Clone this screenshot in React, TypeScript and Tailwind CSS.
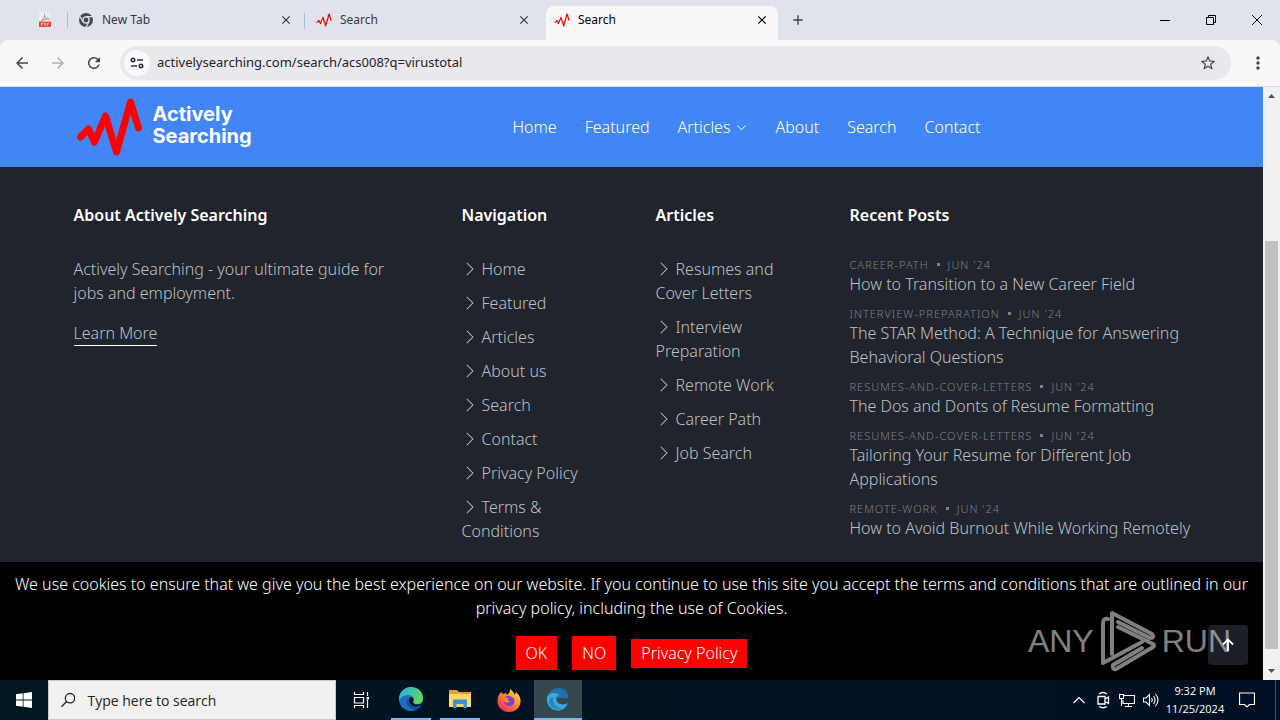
import { ReactNode } from "react"
import { BsChevronRight, BsChevronDown } from "react-icons/bs"
import { MdArrowBack, MdArrowForward, MdRefresh, MdStarBorder, MdMoreVert, MdClose, MdAdd } from "react-icons/md"

const menu = ["Home", "Featured", "Articles", "About", "Search", "Contact"]

const navigation = ["Home", "Featured", "Articles", "About us", "Search", "Contact", "Privacy Policy", "Terms & Conditions"]

const articles = ["Resumes and Cover Letters", "Interview Preparation", "Remote Work", "Career Path", "Job Search"]

const posts = [
  { category: "career-path", title: "How to Transition to a New Career Field" },
  { category: "interview-preparation", title: "The STAR Method: A Technique for Answering Behavioral Questions" },
  { category: "resumes-and-cover-letters", title: "The Dos and Donts of Resume Formatting" },
  { category: "resumes-and-cover-letters", title: "Tailoring Your Resume for Different Job Applications" },
  { category: "remote-work", title: "How to Avoid Burnout While Working Remotely" },
]

function Pulse({ className, width }: { className: string; width: number }) {
  return (
    <svg className={className} viewBox="0 0 66 58" fill="none" stroke="#ff0000" strokeWidth={width} strokeLinecap="round" strokeLinejoin="round">
      <path d="M4 39 L12 31 L18 44 L29 18 L40 54 L54 4 L62 30" />
    </svg>
  )
}

function ChromeIcon() {
  return (
    <svg className="size-4" viewBox="0 0 16 16">
      <circle cx="8" cy="8" r="7" fill="#474b50" />
      <circle cx="8" cy="8" r="3.1" fill="#474b50" stroke="#e0e3ec" strokeWidth="1.3" />
      <path d="M8 4.6 H14.4 M5 9.8 L1.9 4.4 M11 9.8 L7.9 15.2" stroke="#e0e3ec" strokeWidth="1.2" />
    </svg>
  )
}

function PdfIcon() {
  return (
    <svg className="h-4 w-3" viewBox="0 0 12 16">
      <path d="M0 0 H9 L12 3 V16 H0 Z" fill="#ecebee" />
      <path d="M2 9 C5 7 6 4 5.500 2 C5 5 8 7.500 10.500 7 C8 6.500 4 7.500 2 9" fill="none" stroke="#a5a09c" />
      <rect y="9.500" width="12" height="5.500" fill="#e8473c" />
      <path d="M2.500 13.500 V11 H4 V12.300 H2.500 M5.500 11 V13.500 H7 V11 Z M8.500 13.500 V11 H10" fill="none" stroke="#f8c5bf" strokeWidth="0.700" />
    </svg>
  )
}

function Tab({ title, icon, active }: { title: string; icon: ReactNode; active?: boolean }) {
  return (
    <div className={active ? "flex h-[34px] w-[232px] items-center rounded-t-lg bg-[#faf7f9] pr-2 pl-2 pb-1.5 text-black" : "flex h-[34px] w-[238px] items-center pr-3.5 pl-2 pb-1.5 text-[#33373d]"}>
      {icon}
      <span className="ml-2 flex-1">{title}</span>
      <button aria-label="Close tab" className="flex size-4 items-center justify-center">
        <MdClose className="size-3.5" />
      </button>
    </div>
  )
}

function Browser() {
  return (
    <div className="font-['Noto_Sans','Open_Sans',sans-serif] text-[12px]">
      <div className="flex h-10 bg-[#e0e3ec]">
        <div className="flex flex-1 items-end">
          <div className="flex h-[34px] w-[70px] items-center justify-end gap-4 pb-1.5">
            <PdfIcon />
            <span className="mr-0.5 h-4 w-px bg-[#a9bfe0]" />
          </div>
          <Tab title="New Tab" icon={<ChromeIcon />} />
          <span className="-ml-1 mr-[3px] mb-[11px] h-4 w-px bg-[#a9bfe0]" />
          <Tab title="Search" icon={<Pulse className="h-3.5 w-4" width={5} />} />
          <Tab title="Search" icon={<Pulse className="h-3.5 w-4" width={5} />} active />
          <button aria-label="New tab" className="flex h-[34px] w-10 items-center justify-center pb-1.5">
            <MdAdd className="size-4 text-[#3c4045]" />
          </button>
        </div>
        <div className="flex">
          <button aria-label="Minimize" className="flex w-[46px] items-center justify-center">
            <span className="h-px w-2.5 bg-black" />
          </button>
          <button aria-label="Restore" className="flex w-[46px] items-center justify-center">
            <svg className="size-2.5" viewBox="0 0 10 10" fill="none" stroke="#000"><path d="M0.500 2.500 H7.500 V9.500 H0.500 Z M2.500 2.500 V0.500 H9.500 V7.500 H7.500" /></svg>
          </button>
          <button aria-label="Close" className="flex w-[46px] items-center justify-center">
            <svg className="size-2.5" viewBox="0 0 10 10" stroke="#000"><path d="M0 0 L10 10 M10 0 L0 10" /></svg>
          </button>
        </div>
      </div>
      <div className="bg-[#e0e3ec]">
        <div className="flex h-[47px] items-center rounded-t-lg border-b border-[#cfdcee] bg-[#faf7f9] pl-1 text-[#44464b]">
          <button aria-label="Back" className="flex w-9 justify-center"><MdArrowBack className="size-[18px]" /></button>
          <button aria-label="Forward" className="flex w-9 justify-center text-[#aeb0b5]"><MdArrowForward className="size-[18px]" /></button>
          <button aria-label="Reload" className="flex w-9 justify-center"><MdRefresh className="size-[18px]" /></button>
          <div className="ml-2 flex h-[34px] flex-1 items-center rounded-full bg-[#e9e8ed] pr-3.5 pl-1">
            <button aria-label="Site information" className="flex size-[26px] items-center justify-center rounded-full bg-[#faf8fb]">
              <svg className="h-3 w-3.5" viewBox="0 0 14 12" fill="none" stroke="#303236" strokeWidth="1.600">
                <circle cx="3" cy="3" r="1.700" />
                <path d="M7 3 H13 M1 9 H7" />
                <circle cx="11" cy="9" r="1.700" />
              </svg>
            </button>
            <input aria-label="Address" className="ml-[7px] flex-1 bg-transparent text-[13px] text-[#222428] outline-none" defaultValue="activelysearching.com/search/acs008?q=virustotal" />
            <button aria-label="Bookmark"><MdStarBorder className="size-[18px]" /></button>
          </div>
          <button aria-label="Menu" className="mr-3 ml-[17px]"><MdMoreVert className="size-5" /></button>
        </div>
      </div>
    </div>
  )
}

function Header() {
  return (
    <header className="bg-[#4286f5]">
      <div className="mx-auto flex h-20 max-w-[1164px] items-center">
        <a href="#" className="flex w-1/3 items-center gap-2.5 pl-6">
          <Pulse className="ml-0.5 h-[58px] w-[67px]" width={7} />
          <span className="pb-1 font-['Inter',sans-serif] text-[20px] leading-[22px] font-bold text-white">Actively<br />Searching</span>
        </a>
        <nav className="flex flex-1 gap-7 pl-[75px] text-white">
          {menu.map((item) => (
            <a key={item} href="#" className="flex items-center gap-1.5">
              {item}
              {item === "Articles" && <BsChevronDown className="size-[11px]" />}
            </a>
          ))}
        </nav>
      </div>
    </header>
  )
}

function LinkList({ title, links }: { title: string; links: string[] }) {
  return (
    <div className="col-span-2 px-6">
      <h2 className="mb-[30px] font-semibold text-white">{title}</h2>
      <ul className="flex flex-col gap-2.5">
        {links.map((link) => (
          <li key={link}>
            <a href="#"><BsChevronRight className="mr-1 inline size-4 align-[-2px]" />{link}</a>
          </li>
        ))}
      </ul>
    </div>
  )
}

function Footer() {
  return (
    <footer className="flex-1 bg-[#20242c] pt-9 text-[#bec0c4]">
      <div className="mx-auto grid max-w-[1164px] grid-cols-12">
        <div className="col-span-4 px-6">
          <h2 className="mb-[30px] font-semibold text-white">About Actively Searching</h2>
          <p className="mb-4">Actively Searching - your ultimate guide for jobs and employment.</p>
          <a href="#" className="inline-block border-b border-white">Learn More</a>
        </div>
        <LinkList title="Navigation" links={navigation} />
        <LinkList title="Articles" links={articles} />
        <div className="col-span-4 pr-3 pl-6">
          <h2 className="mb-[30px] font-semibold text-white">Recent Posts</h2>
          <ul className="flex flex-col gap-2.5">
            {posts.map((post) => (
              <li key={post.title}>
                <div className="flex items-center gap-2 text-[11px] leading-[15px] tracking-[1px] text-[#7f8287] uppercase">
                  <span>{post.category}</span>
                  <span className="size-[3px] bg-[#7f8287]" />
                  <span>Jun '24</span>
                </div>
                <a href="#" className="block">{post.title}</a>
              </li>
            ))}
          </ul>
        </div>
      </div>
    </footer>
  )
}

function CookieBar() {
  return (
    <div className="bg-black px-3 py-2.5 text-center text-white">
      <p>We use cookies to ensure that we give you the best experience on our website. If you continue to use this site you accept the terms and conditions that are outlined in our privacy policy, including the use of Cookies.</p>
      <div className="mt-4 flex items-center justify-center gap-[15px]">
        <button className="h-[34px] bg-[#ff0000] px-2.5">OK</button>
        <button className="h-[34px] bg-[#ff0000] px-2.5">NO</button>
        <a href="#" className="h-[29px] bg-[#ff0000] px-2.5 leading-[29px]">Privacy Policy</a>
      </div>
    </div>
  )
}

function Watermark() {
  return (
    <div className="pointer-events-none absolute right-8 bottom-2 flex items-center gap-1.5 font-['Liberation_Sans',sans-serif] text-[32px] leading-none text-white opacity-50">
      <span>ANY</span>
      <svg className="h-[62px] w-14" viewBox="0 0 56 62" fill="none" stroke="#fff" strokeWidth="4" strokeLinejoin="round" strokeLinecap="round">
        <path d="M8 9 Q3 8 3 13 V53 L42 32" />
        <path d="M12 44 V3 L52 24 Q55 28 50 28 L18 12" />
        <path d="M18 17 L53 34 Q55 36 53 37 L16 59 Q12 60 13 55 L42 38" />
      </svg>
      <span>RUN</span>
    </div>
  )
}

function Scrollbar() {
  return (
    <div className="flex w-[17px] flex-col items-center bg-[#f1f1f1]">
      <svg className="h-[17px] w-[17px] shrink-0" viewBox="0 0 17 17"><path d="M5 11 L8.500 7 L12 11 Z" fill="#505050" /></svg>
      <div className="flex-[137]" />
      <div className="w-[13px] flex-[408] bg-[#c1c1c1]" />
      <div className="flex-[14]" />
      <svg className="h-[17px] w-[17px] shrink-0" viewBox="0 0 17 17"><path d="M5 6 L8.500 10 L12 6 Z" fill="#505050" /></svg>
    </div>
  )
}

function EdgeIcon() {
  return (
    <svg className="size-6" viewBox="0 0 24 24">
      <defs>
        <linearGradient id="edgeTop" x1="0" y1="0" x2="1" y2="0.400">
          <stop offset="0" stopColor="#2aa8e6" />
          <stop offset="1" stopColor="#5fd865" />
        </linearGradient>
      </defs>
      <circle cx="12" cy="12" r="12" fill="#1a6fc4" />
      <path d="M0 11 C1 4 6 0 12 0 C19 0 24 5 24 11 C24 15 21 17 18 17 C15 17 14 16 14.500 14.500 C16 12 14 8 9.500 8 C5 8 1.500 10 0 14 Z" fill="url(#edgeTop)" />
      <path d="M8 12 C6 17 10 22 16 23 C19 22 21.500 20 22.500 18 C17 21 10 19 10 13 Z" fill="#124c94" />
      <path d="M10 13 C10 10.500 12 9.500 14 11 C15 12 14.500 14 14 15 C14 17 17 18.500 22 17 L24 15 V20 L22.500 18 C17 21 10 19 10 13 Z" fill="#02151f" />
    </svg>
  )
}

function FolderIcon() {
  return (
    <svg className="h-[18px] w-[22px]" viewBox="0 0 22 18">
      <path d="M0 0 H8 L10 2 H22 V17 H0 Z" fill="#e5a126" />
      <path d="M0 4 H22 V17 H0 Z" fill="#ffd96c" />
      <path d="M4 18 V9.500 H18 V18 H14.500 V14 H7.500 V18 Z" fill="#3e94d1" />
    </svg>
  )
}

function FirefoxIcon() {
  return (
    <svg className="size-6" viewBox="0 0 24 24">
      <defs>
        <linearGradient id="fox" x1="1" y1="0" x2="0.200" y2="1">
          <stop offset="0" stopColor="#fff04a" />
          <stop offset="0.450" stopColor="#ff9324" />
          <stop offset="1" stopColor="#f0255c" />
        </linearGradient>
      </defs>
      <path d="M4 4 L6 6 L9 5 L10 7 C12 6 13 4 13 1 C16 3 17 5 17.500 7 L19 4 C22 7 24 10 23.500 14 C23 20 18 24 12 24 C5 24 0.500 19 0.500 13 C0.500 9 2 6 4 4 Z" fill="url(#fox)" />
      <path d="M8 9 C10 7.500 15 7.500 17 11 C18.500 15 16 18 12 18 C9 18 7 16 6.500 13 L10 12 L12 10.500 Z" fill="#7b3fd4" />
      <path d="M6 11 C9 10 10 13 13 13 C12 15 9 15 8 14 Z" fill="#ff8a1f" />
    </svg>
  )
}

function ActiveEdgeIcon() {
  return (
    <svg className="size-6" viewBox="0 0 24 24">
      <path d="M1 14 C0 6 6 1 13 1 C18 1 21 4 22 8 L22 11 H12 C10 10 6 10 4 13 Z" fill="#2371a8" />
      <path d="M1 10 C4 5 10 5 14 8 C9 8 9 15 14 17 C17 18 20 17 22 16 C20 21 16 23.500 12 23.500 C5 23.500 0 18 1 10 Z" fill="#39a9df" />
      <path d="M7 10 C6 16 10 21 16 21 C12 24 4 21 3 15 C3 12 5 10 7 10 Z" fill="#2487c2" />
    </svg>
  )
}

function Taskbar() {
  return (
    <div className="flex h-10 items-stretch bg-linear-to-r from-[#02161f] to-[#020f24] font-['Open_Sans',sans-serif] text-white">
      <button aria-label="Start" className="flex w-12 items-center justify-center">
        <svg className="size-4" viewBox="0 0 16 16" fill="#fff"><path d="M0 2.300 L6.700 1.300 V7.600 H0 Z M7.500 1.200 L16 0 V7.600 H7.500 Z M0 8.400 H6.700 V14.700 L0 13.700 Z M7.500 8.400 H16 V16 L7.500 14.800 Z" /></svg>
      </button>
      <label className="flex w-72 items-center border border-[#c8c8c8] bg-[#f1f1f1] pl-3 text-[#222]">
        <svg className="size-4" viewBox="0 0 16 16" fill="none" stroke="#222" strokeWidth="1.400"><circle cx="10" cy="6" r="5.200" /><path d="M6.300 9.700 L0.500 15.500" /></svg>
        <input aria-label="Type here to search" placeholder="Type here to search" className="ml-3 w-full bg-transparent text-[14px] placeholder:text-[#222]" />
      </label>
      <button aria-label="Task view" className="flex w-[50px] items-center justify-center">
        <svg className="size-4" viewBox="0 0 16 16" fill="none" stroke="#fff" strokeWidth="1.200"><path d="M1.500 0 V2.500 H10.500 V0 M1.500 5.500 H10.500 V11 H1.500 Z M1.500 16 V13.500 H10.500 V16 M14.500 0 V4 M14.500 8 V16" /><path d="M13.500 5 H16 V7.500 H13.500 Z" fill="#fff" stroke="none" /></svg>
      </button>
      <button aria-label="Edge" className="mr-[9px] ml-[5px] flex w-10 items-center justify-center border-b-2 border-[#76b9ed]"><EdgeIcon /></button>
      <button aria-label="File Explorer" className="flex w-10 items-center justify-center border-b-2 border-[#76b9ed]"><FolderIcon /></button>
      <button aria-label="Firefox" className="flex w-[54px] items-center justify-center pl-1"><FirefoxIcon /></button>
      <button aria-label="Browser" className="flex w-12 items-center justify-center border-b-2 border-[#76b9ed] bg-[#35474f]"><ActiveEdgeIcon /></button>
      <div className="flex flex-1 items-center justify-end">
        <svg className="w-6 px-1.5" viewBox="0 0 12 8" fill="none" stroke="#fff" strokeWidth="1.200"><path d="M0.500 7 L6 1.500 L11.500 7" /></svg>
        <svg className="w-6 px-1" viewBox="0 0 16 18" fill="none" stroke="#fff" strokeWidth="1.300"><path d="M3 5.500 H10 V13 H3 Z M10 8 L13.500 6 V12.500 L10 10.500 M4 3 Q8 0 12 3 M4 15.500 Q8 18 12 15.500" /></svg>
        <svg className="w-6 px-1" viewBox="0 0 16 16" fill="none" stroke="#fff" strokeWidth="1.100"><path d="M5 3.500 H15.500 V11.500 H4 V8 M9.500 11.500 V14 M6 14.500 H13 M0.500 2.500 H4.500 V6.500 H0.500 Z M2.500 6.500 V14" /></svg>
        <svg className="w-6 px-1" viewBox="0 0 16 16" fill="none" stroke="#fff" strokeWidth="1.100"><path d="M0.500 6 H3 L6.500 2.500 V13.500 L3 10 H0.500 Z M8.500 6 Q10 8 8.500 10 M10.500 4 Q13.500 8 10.500 12 M12.500 2 Q17.500 8 12.500 14" /></svg>
        <div className="w-16 text-center text-[11px] leading-[18px]">9:32 PM<br />11/25/2024</div>
        <svg className="mr-5 ml-3 size-4" viewBox="0 0 16 16" fill="none" stroke="#fff" strokeWidth="1.200"><path d="M0.500 1 H15.500 V12.500 H10.500 L8 15 L5.500 12.500 H0.500 Z" /></svg>
        <span className="mr-1 h-10 w-px bg-[#46505c]" />
      </div>
    </div>
  )
}

export default function App() {
  return (
    <div className="flex min-h-screen flex-col">
      <Browser />
      <div className="flex flex-1">
        <main className="relative flex flex-1 flex-col font-['Noto_Sans','Open_Sans',sans-serif] text-base leading-6 font-light">
          <Header />
          <Footer />
          <CookieBar />
          <button aria-label="Back to top" className="absolute right-[15px] bottom-[15px] flex size-10 items-center justify-center rounded-sm bg-[#1b1f26]">
            <svg className="size-3.5" viewBox="0 0 14 14" fill="none" stroke="#fff" strokeWidth="1.800"><path d="M7 13 V1.500 M2 6.500 L7 1.500 L12 6.500" /></svg>
          </button>
          <Watermark />
        </main>
        <Scrollbar />
      </div>
      <Taskbar />
    </div>
  )
}
